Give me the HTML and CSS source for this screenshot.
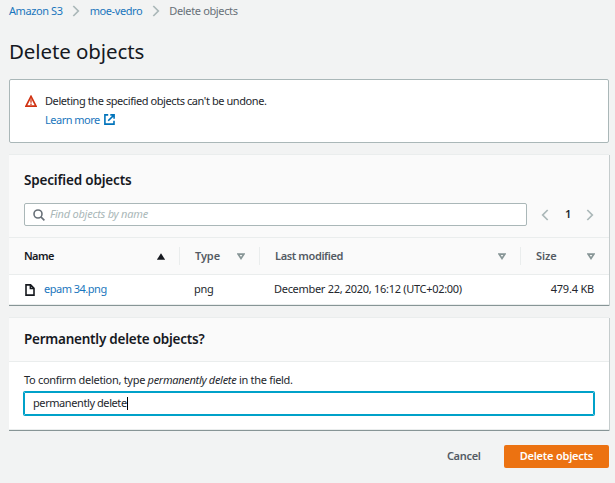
FILE: index.html
```html
<!DOCTYPE html>
<html lang="en">
<head>
<meta charset="utf-8">
<title>Delete objects</title>
<link rel="stylesheet" href="styles.css">
</head>
<body>
<nav class="crumbs">
  <a class="crumb" href="#">Amazon S3</a>
  <svg class="crumb-sep" viewBox="0 0 8 12"><path d="M1.300 1l5 5-5 5"/></svg>
  <a class="crumb" href="#">moe-vedro</a>
  <svg class="crumb-sep" viewBox="0 0 8 12"><path d="M1.300 1l5 5-5 5"/></svg>
  <span class="crumb current">Delete objects</span>
</nav>
<h1>Delete objects</h1>

<section class="alert">
  <svg class="warn" viewBox="0 0 12 12"><path d="M6 1.400L11 11.100H1z"/><path class="mark" d="M6 4.300v3.400M6 8.500v1.600"/></svg>
  <div class="alert-text">
    <p>Deleting the specified objects can't be undone.</p>
    <p><a class="learn" href="#">Learn more</a><svg class="ext" viewBox="0 0 11 11"><path d="M4.200.9H.9v9.200H10V6.800M6.300.9h3.800v3.800M9.900 1.100L4.200 6.800"/></svg></p>
  </div>
</section>

<section class="panel objects">
  <header class="panel-head">
    <h2>Specified objects</h2>
    <div class="tools">
      <div class="search">
        <svg class="lens" viewBox="0 0 12 12"><circle cx="5" cy="5" r="4"/><path d="M7.900 7.900l3.500 3.500"/></svg>
        <span class="placeholder">Find objects by name</span>
      </div>
      <div class="pager">
        <svg class="page-arrow" viewBox="0 0 8 12"><path d="M6.700 1l-5 5 5 5"/></svg>
        <b>1</b>
        <svg class="page-arrow" viewBox="0 0 8 12"><path d="M1.300 1l5 5-5 5"/></svg>
      </div>
    </div>
  </header>
  <div class="row head">
    <div class="cell sorted"><span>Name</span><svg class="sort" viewBox="0 0 8 7"><path class="solid" d="M4 .3L8.200 6.700H-.2z"/></svg></div>
    <div class="cell short"><span>Type</span><svg class="sort" viewBox="0 0 8 7"><path d="M1.200 1.200h5.600L4 5.400z"/></svg></div>
    <div class="cell"><span>Last modified</span><svg class="sort" viewBox="0 0 8 7"><path d="M1.200 1.200h5.600L4 5.400z"/></svg></div>
    <div class="cell short"><span>Size</span><svg class="sort" viewBox="0 0 8 7"><path d="M1.200 1.200h5.600L4 5.400z"/></svg></div>
  </div>
  <div class="row data">
    <div class="cell name"><svg class="file" viewBox="0 0 10 12"><path d="M1 .9h4.600L9 4.300v6.800H1zM5.400 1v3.500H9"/></svg><a href="#">epam 34.png</a></div>
    <div class="cell">png</div>
    <div class="cell date">December 22, 2020, 16:12 (UTC+02:00)</div>
    <div class="cell num">479.4 KB</div>
  </div>
</section>

<section class="panel confirm">
  <header class="panel-head"><h2>Permanently delete objects?</h2></header>
  <div class="panel-body">
    <p class="hint">To confirm deletion, type <em>permanently delete</em> in the field.</p>
    <div class="field"><span>permanently delete</span><i class="caret"></i></div>
  </div>
</section>

<footer class="actions">
  <button class="btn plain">Cancel</button>
  <button class="btn primary">Delete objects</button>
</footer>
</body>
</html>
```
FILE: styles.css
```css
* { box-sizing: border-box; }
body {
  margin: 0;
  width: 615px;
  height: 483px;
  overflow: hidden;
  padding: 0 6px 0 9px;
  background: #f2f3f3;
  color: #24272d;
  font: 11px/16px "Noto Sans", sans-serif;
  letter-spacing: -0.42px;
}
h1, h2, p { margin: 0; }
h1, h2 { color: #16191f; }
a { color: #1a76bd; text-decoration: none; }
svg { fill: none; flex: none; display: block; }

.crumbs { display: flex; align-items: center; height: 22px; }
.crumb-sep { width: 8px; height: 12px; margin: 0 9.600px; stroke: #aab7b8; stroke-width: 1.7; }
.current { color: #687078; letter-spacing: -0.36px; }
h1 { margin-top: 15px; height: 42px; font-size: 20.5px; line-height: 28px; font-weight: 400; letter-spacing: -0.1px; }

.alert { display: flex; height: 64px; padding: 11px 15px; background: #fff; border: 1px solid #aab7b8; border-radius: 2px; }
.warn { width: 12px; height: 12px; margin: 4px 8px 0 0; stroke: #d13212; stroke-width: 1.7; }
.mark { stroke-width: 1.3; }
.alert-text p { display: flex; align-items: center; height: 19px; line-height: 15px; }
.learn { letter-spacing: -0.5px; }
.ext { width: 11px; height: 11px; margin-left: 4px; stroke: #0073bb; stroke-width: 1.6; }

.panel { border-top: 1px solid #eaeded; border-bottom: 1px solid #eaeded; background: #fff; box-shadow: 0 1px 0 0 #879596, 1px 1px 0 0 #c5cccd; }
.objects { margin-top: 11px; height: 151px; }
.panel-head { background: #fafafa; border-bottom: 1px solid #eaeded; padding: 0 15px; }
.objects .panel-head { height: 83px; padding-top: 14px; }
h2 { font-size: 13.5px; line-height: 22px; font-weight: 600; letter-spacing: -0.18px; }
.tools { display: flex; align-items: center; justify-content: space-between; margin-top: 12px; }
.search { display: flex; align-items: center; width: 503px; height: 23px; padding: 0 0 1px 8px; background: #fff; border: 1px solid #aab7b8; border-radius: 2px; }
.lens { width: 12px; height: 12px; margin: 1px 5px 0 0; stroke: #687078; stroke-width: 1.6; }
.placeholder { color: #aab7b8; font-style: italic; letter-spacing: -0.24px; }
.pager { display: flex; align-items: center; justify-content: space-between; width: 53px; }
.pager b { font-weight: 600; padding: 0 0 1px 1px; }
.page-arrow { width: 8px; height: 12px; stroke: #aab7b8; stroke-width: 1.7; }

.row { display: grid; grid-template-columns: 171px 80px 261px 88px; align-items: center; }
.cell { display: flex; align-items: center; padding-left: 15px; }
.head { height: 37px; background: #fafafa; border-bottom: 1px solid #eaeded; color: #545b64; font-weight: 600; letter-spacing: -0.38px; }
.head .cell { height: 18px; justify-content: space-between; padding-right: 14px; border-right: 1px solid #eaeded; }
.head .cell:last-child { border-right: 0; }
.head .short { letter-spacing: -0.1px; }
.head .sorted { color: #16191f; letter-spacing: -0.6px; }
.sort { width: 8px; height: 7px; stroke: #879596; stroke-width: 1.7; }
.solid { fill: #16191f; stroke: none; }
.data { height: 28px; letter-spacing: -0.28px; }
.data .cell { padding-left: 14px; }
.data .name { padding-left: 15px; letter-spacing: -0.5px; }
.data .date { letter-spacing: -0.3px; }
.file { width: 10px; height: 12px; margin: 2px 9px 0 1px; stroke: #16191f; stroke-width: 1.6; }
.data .num { justify-content: flex-end; padding-right: 15px; letter-spacing: -0.2px; }

.confirm { margin-top: 12px; height: 113px; }
.confirm .panel-head { height: 44px; padding-top: 10px; }
.confirm h2 { letter-spacing: -0.24px; }
.panel-body { padding: 10px 15px 0; }
.hint { height: 20px; letter-spacing: -0.3px; }
.field { display: flex; align-items: center; height: 23px; padding: 0 0 1px 8px; border: 1px solid #00a1c9; border-radius: 1px; box-shadow: 0 0 0 1px #00a1c9; letter-spacing: -0.42px; }
.caret { width: 1px; height: 13px; background: #000; }

.actions { display: flex; justify-content: flex-end; margin-top: 15px; }
.btn { height: 23px; padding: 0 16px 1px; border: 0; border-radius: 2px; background: none; color: #545b64; font: 600 11px/16px "Noto Sans", sans-serif; letter-spacing: -0.3px; }
.plain { margin-right: 7px; }
.primary { background: #ec7211; color: #fff; letter-spacing: -0.22px; }
```
